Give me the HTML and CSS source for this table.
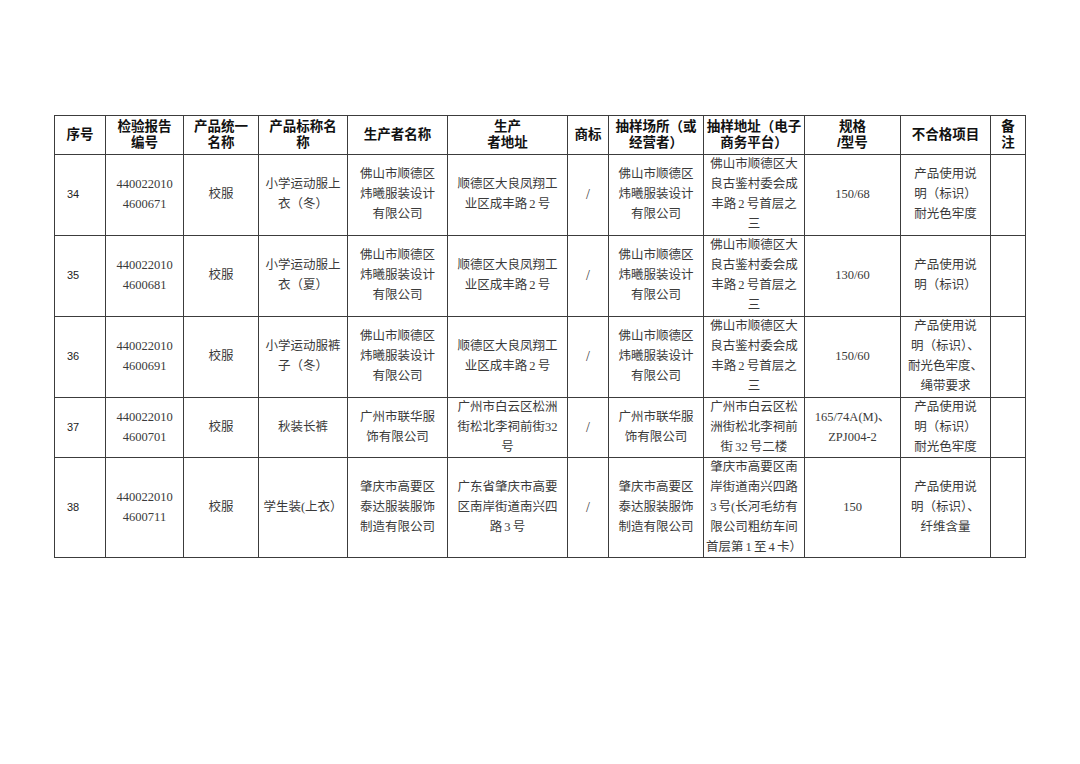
FILE: index.html
```html
<!DOCTYPE html>
<html lang="zh-CN">
<head>
<meta charset="utf-8">
<title>不合格产品信息</title>
<link rel="stylesheet" href="styles.css">
</head>
<body>
<div class="page">
<table class="grid">
<colgroup>
<col class="c1"><col class="c2"><col class="c3"><col class="c4"><col class="c5"><col class="c6">
<col class="c7"><col class="c8"><col class="c9"><col class="c10"><col class="c11"><col class="c12">
</colgroup>
<thead>
<tr class="hd">
<th>序号</th>
<th>检验报告<br>编号</th>
<th>产品统一<br>名称</th>
<th>产品标称名<br>称</th>
<th>生产者名称</th>
<th>生产<br>者地址</th>
<th>商标</th>
<th>抽样场所（或<br>经营者）</th>
<th>抽样地址（电子<br>商务平台）</th>
<th>规格<br>/型号</th>
<th>不合格项目</th>
<th>备<br>注</th>
</tr>
</thead>
<tbody>
<tr class="r81">
<td class="seq">34</td>
<td>440022010<br>4600671</td>
<td>校服</td>
<td>小学运动服上<br>衣（冬）</td>
<td>佛山市顺德区<br>炜曦服装设计<br>有限公司</td>
<td>顺德区大良凤翔工<br>业区成丰路 2 号</td>
<td class="slash">/</td>
<td>佛山市顺德区<br>炜曦服装设计<br>有限公司</td>
<td>佛山市顺德区大<br>良古鉴村委会成<br>丰路 2 号首层之<br>三</td>
<td>150/68</td>
<td>产品使用说<br>明（标识）<br>耐光色牢度</td>
<td></td>
</tr>
<tr class="r81">
<td class="seq">35</td>
<td>440022010<br>4600681</td>
<td>校服</td>
<td>小学运动服上<br>衣（夏）</td>
<td>佛山市顺德区<br>炜曦服装设计<br>有限公司</td>
<td>顺德区大良凤翔工<br>业区成丰路 2 号</td>
<td class="slash">/</td>
<td>佛山市顺德区<br>炜曦服装设计<br>有限公司</td>
<td>佛山市顺德区大<br>良古鉴村委会成<br>丰路 2 号首层之<br>三</td>
<td>130/60</td>
<td>产品使用说<br>明（标识）</td>
<td></td>
</tr>
<tr class="r81">
<td class="seq">36</td>
<td>440022010<br>4600691</td>
<td>校服</td>
<td>小学运动服裤<br>子（冬）</td>
<td>佛山市顺德区<br>炜曦服装设计<br>有限公司</td>
<td>顺德区大良凤翔工<br>业区成丰路 2 号</td>
<td class="slash">/</td>
<td>佛山市顺德区<br>炜曦服装设计<br>有限公司</td>
<td>佛山市顺德区大<br>良古鉴村委会成<br>丰路 2 号首层之<br>三</td>
<td>150/60</td>
<td>产品使用说<br>明（标识）、<br>耐光色牢度、<br>绳带要求</td>
<td></td>
</tr>
<tr class="r60">
<td class="seq">37</td>
<td>440022010<br>4600701</td>
<td>校服</td>
<td>秋装长裤</td>
<td>广州市联华服<br>饰有限公司</td>
<td>广州市白云区松洲<br>街松北李祠前街32<br>号</td>
<td class="slash">/</td>
<td>广州市联华服<br>饰有限公司</td>
<td>广州市白云区松<br>洲街松北李祠前<br>街 32 号二楼</td>
<td>165/74A(M)、<br>ZPJ004-2</td>
<td>产品使用说<br>明（标识）<br>耐光色牢度</td>
<td></td>
</tr>
<tr class="r101">
<td class="seq">38</td>
<td>440022010<br>4600711</td>
<td>校服</td>
<td>学生装(上衣）</td>
<td>肇庆市高要区<br>泰达服装服饰<br>制造有限公司</td>
<td>广东省肇庆市高要<br>区南岸街道南兴四<br>路 3 号</td>
<td class="slash">/</td>
<td>肇庆市高要区<br>泰达服装服饰<br>制造有限公司</td>
<td>肇庆市高要区南<br>岸街道南兴四路<br>3 号(长河毛纺有<br>限公司粗纺车间<br>首层第 1 至 4 卡）</td>
<td>150</td>
<td>产品使用说<br>明（标识）、<br>纤维含量</td>
<td></td>
</tr>
</tbody>
</table>
</div>
</body>
</html>
```

FILE: styles.css
```css
html, body {
  margin: 0;
  padding: 0;
  background: #ffffff;
}

.page {
  padding: 115px 0 0 54px;
}

.grid {
  border-collapse: collapse;
  table-layout: fixed;
  width: 971px;
  font-family: "Liberation Serif", "Noto Sans CJK SC", serif;
  font-size: 12.5px;
  line-height: 19.8px;
  word-spacing: -1px;
  color: #3a3a3a;
}

.c1 { width: 51px; }
.c2 { width: 78px; }
.c3 { width: 75px; }
.c4 { width: 89px; }
.c5 { width: 100px; }
.c6 { width: 120px; }
.c7 { width: 41px; }
.c8 { width: 95px; }
.c9 { width: 101px; }
.c10 { width: 96px; }
.c11 { width: 90px; }
.c12 { width: 35px; }

.grid th,
.grid td {
  border: 1px solid #3c3c3c;
  padding: 0 1px;
  text-align: center;
  vertical-align: middle;
  white-space: nowrap;
  overflow: hidden;
}

.grid th {
  font-family: "Liberation Sans", "Noto Sans CJK SC", sans-serif;
  font-weight: bold;
  font-size: 13.5px;
  line-height: 16.5px;
  word-spacing: 0;
  color: #111111;
}

.hd { height: 39px; }
.r81 { height: 81px; }
.r60 { height: 60px; }
.r101 { height: 100px; }

.grid td.seq {
  font-family: "Liberation Sans", "Noto Sans CJK SC", sans-serif;
  font-size: 11px;
  text-align: left;
  padding-left: 12px;
  color: #222222;
}

.grid td.slash {
  font-size: 14px;
}
```
